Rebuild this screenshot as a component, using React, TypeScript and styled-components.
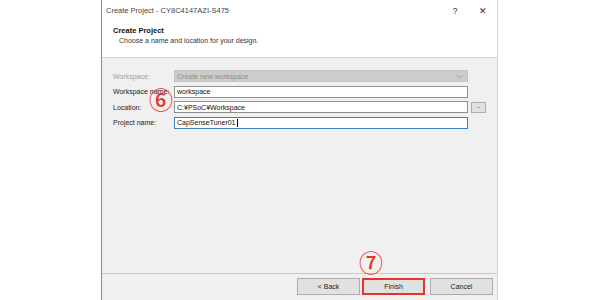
import styled, { createGlobalStyle } from "styled-components";

const GlobalStyle = createGlobalStyle`
  html, body {
    margin: 0;
    padding: 0;
    background: #ffffff;
  }
  body {
    font-family: "Liberation Sans", "Noto Sans CJK JP", sans-serif;
    font-size: 8px;
    color: #1a1a1a;
  }
`;

const Page = styled.div`
  width: 600px;
  height: 300px;
  overflow: hidden;
  display: flex;
  padding-left: 101px;
  box-sizing: border-box;
`;

const Window = styled.div`
  width: 397px;
  height: 300px;
  display: flex;
  flex-direction: column;
  border-left: 1px solid #8a8a8a;
  border-right: 1px solid #d6d6d6;
  box-sizing: border-box;
  background: #f0f0f0;
`;

const TitleBar = styled.div`
  height: 21px;
  display: flex;
  align-items: center;
  padding: 0 0 0 4px;
  background: #ffffff;
  color: #444;
  font-size: 7.5px;
`;

const TitleText = styled.span`
  flex: 1;
`;

const TitleButton = styled.span<{ $w: number }>`
  width: ${({ $w }) => $w}px;
  text-align: center;
  font-size: 9px;
  color: #333;
`;

const Header = styled.div`
  height: 37px;
  background: #ffffff;
  border-bottom: 1px solid #cfcfcf;
  padding: 5px 0 0 11px;
  box-sizing: border-box;
`;

const HeaderTitle = styled.div`
  font-weight: bold;
  font-size: 7.5px;
  color: #111;
  line-height: 10px;
`;

const HeaderSub = styled.div`
  font-size: 7px;
  color: #333;
  padding-left: 6px;
  line-height: 9px;
`;

const Body = styled.div`
  flex: 1;
  padding: 12px 0 0 11px;
`;

const Form = styled.div`
  display: grid;
  grid-template-columns: 61px 294px 18px;
  grid-auto-rows: 12px;
  row-gap: 3.5px;
  align-items: center;
  position: relative;
`;

const Label = styled.span<{ $disabled?: boolean }>`
  font-size: 7px;
  color: ${({ $disabled }) => ($disabled ? "#a0a0a0" : "#222")};
  white-space: nowrap;
`;

const Combo = styled.div`
  height: 12px;
  background: #cccccc;
  border: 1px solid #c4c4c4;
  box-sizing: border-box;
  display: flex;
  align-items: center;
  justify-content: space-between;
  padding: 0 4px 0 2px;
  color: #8c8c8c;
  font-size: 7px;
`;

const Field = styled.div<{ $focused?: boolean }>`
  height: 12px;
  background: #ffffff;
  border: 1px solid ${({ $focused }) => ($focused ? "#3c7fc4" : "#8f8f8f")};
  box-sizing: border-box;
  display: flex;
  align-items: center;
  padding-left: 2px;
  font-size: 7px;
  color: #111;
`;

const Caret = styled.span`
  display: inline-block;
  width: 1px;
  height: 8px;
  background: #000;
  margin-left: 1px;
`;

const BrowseButton = styled.div`
  width: 15px;
  height: 11px;
  margin-left: 3px;
  background: #e1e1e1;
  border: 1px solid #adadad;
  box-sizing: border-box;
  font-size: 7px;
  display: flex;
  justify-content: center;
  line-height: 6px;
`;

const Marker = styled.span`
  position: absolute;
  width: 26px;
  height: 26px;
  display: flex;
  align-items: center;
  justify-content: center;
  color: #e8332a;
  font-size: 24px;
  font-weight: 500;
  line-height: 1;
  font-family: "Noto Sans CJK JP", "DejaVu Sans", sans-serif;
  pointer-events: none;
`;

const Footer = styled.div`
  height: 27px;
  border-top: 1px solid #c8c8c8;
  display: flex;
  align-items: flex-start;
  justify-content: flex-end;
  gap: 2px;
  padding: 4px 4px 0 0;
  box-sizing: border-box;
  position: relative;
`;

const Button = styled.div<{ $highlight?: boolean }>`
  width: 63px;
  height: 17px;
  box-sizing: border-box;
  background: #e1e1e1;
  border: ${({ $highlight }) => ($highlight ? "2px solid #e8332a" : "1px solid #adadad")};
  display: flex;
  align-items: center;
  justify-content: center;
  font-size: 7px;
  color: #222;
  margin-left: ${({ $highlight }) => ($highlight ? "0" : "3px")};
`;

const Chevron = () => (
  <svg width="7" height="5" viewBox="0 0 7 5">
    <path d="M0.5 1 L3.5 4 L6.5 1" stroke="#9a9a9a" strokeWidth="0.9" fill="none" />
  </svg>
);

export default function App() {
  return (
    <>
      <GlobalStyle />
      <Page>
        <Window>
          <TitleBar>
            <TitleText>Create Project - CY8C4147AZI-S475</TitleText>
            <TitleButton $w={28}>?</TitleButton>
            <TitleButton $w={28}>✕</TitleButton>
          </TitleBar>
          <Header>
            <HeaderTitle>Create Project</HeaderTitle>
            <HeaderSub>Choose a name and location for your design.</HeaderSub>
          </Header>
          <Body>
            <Form>
              <Label $disabled>Workspace:</Label>
              <Combo>
                <span>Create new workspace</span>
                <Chevron />
              </Combo>
              <span />
              <Label>Workspace name:</Label>
              <Field>workspace</Field>
              <span />
              <Label>Location:</Label>
              <Field>C:¥PSoC¥Workspace</Field>
              <BrowseButton>..</BrowseButton>
              <Label>Project name:</Label>
              <Field $focused>
                CapSenseTuner01
                <Caret />
              </Field>
              <span />
              <Marker style={{ left: 35, top: 16 }}>⑥</Marker>
            </Form>
          </Body>
          <Footer>
            <Marker style={{ left: 256, top: -25 }}>⑦</Marker>
            <Button>&lt; Back</Button>
            <Button $highlight>Finish</Button>
            <Button>Cancel</Button>
          </Footer>
        </Window>
      </Page>
    </>
  );
}
